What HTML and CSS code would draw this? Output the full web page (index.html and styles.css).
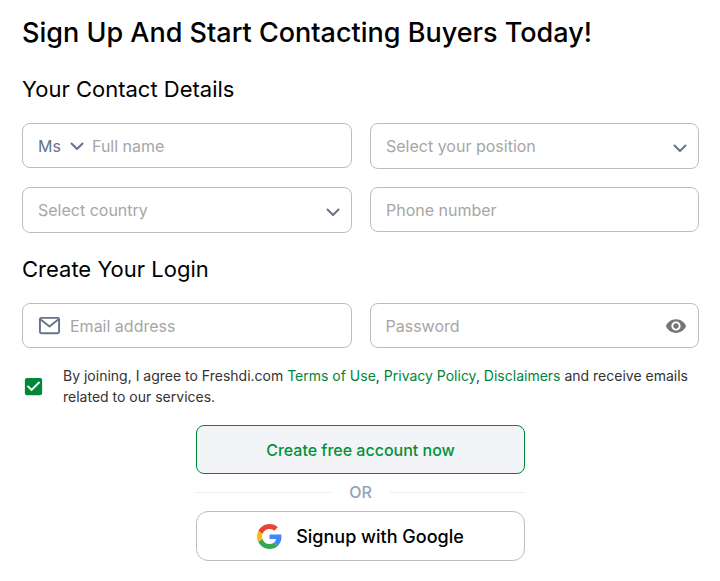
FILE: index.html
```
<!DOCTYPE html>
<html lang="en">
<head>
    <meta charset="UTF-8">
    <meta name="viewport" content="width=device-width, initial-scale=1.0">
    <title>Sign Up - Freshdi</title>
    <link rel="stylesheet" href="styles.css">
</head>
<body>
    <main class="signup">
        <h1>Sign Up And Start Contacting Buyers Today!</h1>

        <form class="signup-form">
            <h2>Your Contact Details</h2>
            <div class="fields">
                <div class="field">
                    <div class="select-wrap title-select">
                        <select name="title" aria-label="Title">
                            <option>Ms</option>
                            <option>Mr</option>
                        </select>
                        <svg class="chevron" viewBox="0 0 14 14" aria-hidden="true"><path d="M1.500 4.500 7 10l5.500-5.500"/></svg>
                    </div>
                    <input type="text" name="fullname" placeholder="Full name" aria-label="Full name">
                </div>
                <div class="field field-select">
                    <div class="select-wrap">
                        <select class="empty" name="position" aria-label="Position">
                            <option>Select your position</option>
                        </select>
                        <svg class="chevron" viewBox="0 0 14 14" aria-hidden="true"><path d="M1.500 4.500 7 10l5.500-5.500"/></svg>
                    </div>
                </div>
                <div class="field field-select">
                    <div class="select-wrap">
                        <select class="empty" name="country" aria-label="Country">
                            <option>Select country</option>
                        </select>
                        <svg class="chevron" viewBox="0 0 14 14" aria-hidden="true"><path d="M1.500 4.500 7 10l5.500-5.500"/></svg>
                    </div>
                </div>
                <div class="field">
                    <input type="tel" name="phone" placeholder="Phone number" aria-label="Phone number">
                </div>
            </div>

            <h2>Create Your Login</h2>
            <div class="fields">
                <div class="field">
                    <svg class="mail-icon" viewBox="0 0 24 24" aria-hidden="true">
                        <rect x="2" y="4" width="20" height="16" rx="1.500"/>
                        <path d="M2.500 5.500 12 13l9.500-7.500"/>
                    </svg>
                    <input type="email" name="email" placeholder="Email address" aria-label="Email address">
                </div>
                <div class="field">
                    <input type="password" name="password" placeholder="Password" aria-label="Password">
                    <button class="eye-btn" type="button" aria-label="Show password">
                        <svg viewBox="0 0 24 24" aria-hidden="true"><path d="M12 4.500C7 4.500 2.730 7.610 1 12c1.730 4.390 6 7.500 11 7.500s9.270-3.110 11-7.500c-1.730-4.390-6-7.500-11-7.500zM12 17c-2.760 0-5-2.240-5-5s2.240-5 5-5 5 2.240 5 5-2.240 5-5 5zm0-8c-1.660 0-3 1.340-3 3s1.340 3 3 3 3-1.340 3-3-1.340-3-3-3z"/></svg>
                    </button>
                </div>
            </div>

            <div class="terms">
                <span class="checkbox">
                    <input type="checkbox" id="agree" name="agree" checked>
                    <svg viewBox="0 0 24 24" aria-hidden="true"><path d="M19 3H5c-1.110 0-2 .9-2 2v14c0 1.100.89 2 2 2h14c1.110 0 2-.9 2-2V5c0-1.100-.89-2-2-2zm-9 14l-5-5 1.410-1.410L10 14.170l7.590-7.590L19 8l-9 9z"/></svg>
                </span>
                <label for="agree">By joining, I agree to Freshdi.com <a href="#">Terms of Use</a>, <a href="#">Privacy Policy</a>, <a href="#">Disclaimers</a> and receive emails related to our services.</label>
            </div>

            <div class="actions">
                <button class="btn btn-create" type="submit">Create free account now</button>
                <div class="divider">OR</div>
                <button class="btn btn-google" type="button">
                    <svg viewBox="0 0 48 48" aria-hidden="true">
                        <path fill="#ea4335" d="M24 9.500c3.540 0 6.710 1.220 9.210 3.600l6.850-6.850C35.900 2.380 30.470 0 24 0 14.620 0 6.510 5.380 2.560 13.220l7.980 6.190C12.430 13.720 17.740 9.500 24 9.500z"/>
                        <path fill="#4285f4" d="M46.980 24.550c0-1.570-.15-3.090-.38-4.550H24v9.020h12.940c-.58 2.960-2.260 5.480-4.780 7.180l7.730 6c4.510-4.180 7.090-10.360 7.090-17.650z"/>
                        <path fill="#fbbc05" d="M10.530 28.590c-.48-1.450-.76-2.990-.76-4.590s.27-3.140.76-4.590l-7.980-6.190C.92 16.460 0 20.120 0 24s.92 7.540 2.560 10.780l7.970-6.190z"/>
                        <path fill="#34a853" d="M24 48c6.480 0 11.930-2.130 15.890-5.810l-7.730-6c-2.150 1.450-4.920 2.300-8.160 2.300-6.260 0-11.570-4.220-13.470-9.910l-7.980 6.190C6.510 42.620 14.620 48 24 48z"/>
                    </svg>
                    Signup with Google
                </button>
            </div>
        </form>
    </main>
</body>
</html>
```

FILE: styles.css
```
* {
    margin: 0;
    padding: 0;
    box-sizing: border-box;
}

body {
    background-color: #fff;
    color: #000;
    font-family: Inter, "Liberation Sans", sans-serif;
    font-size: 16px;
}

.signup {
    padding: 15px 21px 20px 22px;
}

h1 {
    font-size: 27px;
    font-weight: 500;
    line-height: 36px;
}

h2 {
    font-size: 22px;
    font-weight: 400;
    line-height: 30px;
    margin: 23px 0 19px;
}

.fields + h2 {
    margin-top: 21px;
}

.fields {
    display: grid;
    grid-template-columns: 1fr 1fr;
    align-items: start;
    gap: 18px;
}

.field {
    display: flex;
    align-items: center;
    min-height: 45px;
    padding: 0 11px 0 15px;
    border: 1px solid #bdbdbd;
    border-radius: 8px;
}

.field-select {
    min-height: 46px;
}

input,
select,
button {
    font: inherit;
}

.field input {
    flex: 1;
    min-width: 0;
    height: 24px;
    border: none;
    outline: none;
    background: none;
    color: #333;
}

.field input::placeholder {
    color: #a6a6a6;
    opacity: 1;
}

/* select and its arrow share one grid cell */
.select-wrap {
    display: grid;
    flex: 1;
    align-items: center;
}

.select-wrap select,
.select-wrap .chevron {
    grid-area: 1 / 1;
}

.select-wrap select {
    appearance: none;
    width: 100%;
    height: 24px;
    border: none;
    outline: none;
    background: none;
    color: #64748b;
}

.select-wrap select.empty {
    color: #a6a6a6;
}

.chevron {
    justify-self: end;
    width: 14px;
    height: 14px;
    fill: none;
    stroke: #64748b;
    stroke-width: 2;
    stroke-linecap: round;
    stroke-linejoin: round;
    pointer-events: none;
}

.field-select .chevron {
    margin-top: 4px;
}

.title-select {
    flex: none;
    width: 46px;
    margin-right: 8px;
}

.mail-icon {
    width: 23px;
    height: 23px;
    margin-right: 9px;
    fill: none;
    stroke: #64748b;
    stroke-width: 2;
    stroke-linejoin: round;
}

.eye-btn {
    display: flex;
    border: none;
    background: none;
    cursor: pointer;
}

.eye-btn svg {
    width: 22px;
    height: 22px;
    fill: #757575;
}

.terms {
    display: flex;
    align-items: center;
    gap: 18px;
    margin-top: 17px;
    font-size: 14px;
    line-height: 21px;
    color: #333;
}

.terms a {
    color: #00853a;
    text-decoration: none;
}

.checkbox {
    display: grid;
    flex: none;
}

.checkbox input,
.checkbox svg {
    grid-area: 1 / 1;
    width: 23px;
    height: 23px;
}

.checkbox input {
    appearance: none;
}

.checkbox svg {
    fill: #008837;
    pointer-events: none;
}

.actions {
    display: flex;
    flex-direction: column;
    width: 50%;
    max-width: 329px;
    margin: 18px auto 0;
}

.btn {
    display: flex;
    align-items: center;
    justify-content: center;
    min-height: 49px;
    font-weight: 500;
    cursor: pointer;
}

.btn-create {
    border: 1px solid #008837;
    border-radius: 8px;
    background-color: #f2f4f7;
    color: #00913a;
}

.divider {
    display: flex;
    align-items: center;
    gap: 18px;
    line-height: 37px;
    font-weight: 500;
    color: #94a3b8;
}

.divider::before,
.divider::after {
    content: "";
    flex: 1;
    height: 1px;
    background-color: #ececec;
}

.btn-google {
    gap: 14px;
    min-height: 50px;
    border: 1px solid #bdbdbd;
    border-radius: 12px;
    background-color: #fff;
    color: #000;
    font-size: 18px;
}

.btn-google svg {
    width: 25px;
    height: 25px;
}
```
